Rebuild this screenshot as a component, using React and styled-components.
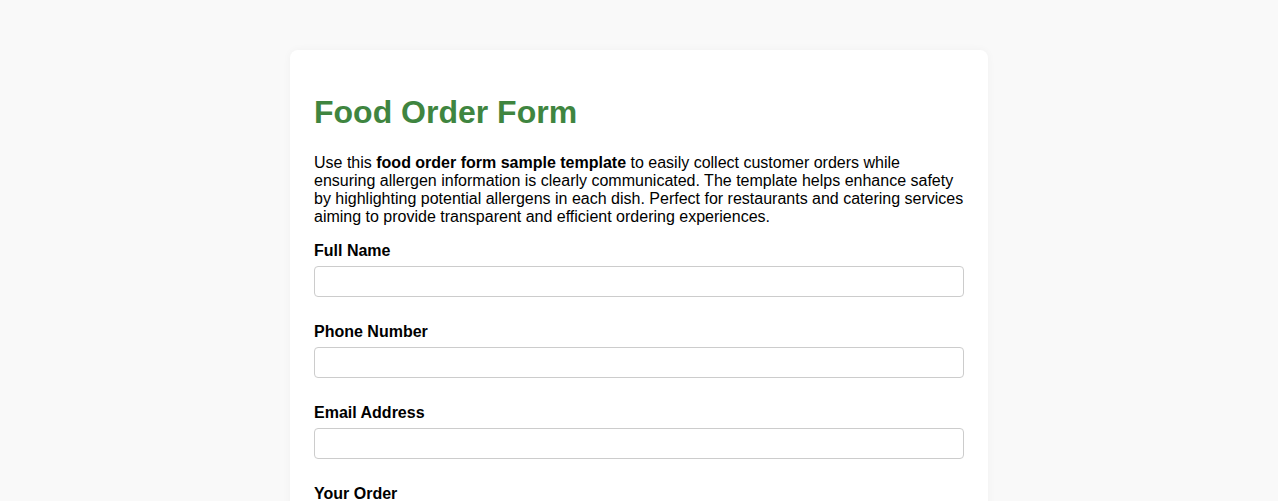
import React from 'react';
import styled, { createGlobalStyle } from 'styled-components';

const GlobalStyle = createGlobalStyle`
  body {
    margin: 0;
    background: #f9f9f9;
    font-family: "Liberation Sans", Arial, sans-serif;
    color: #000;
  }
`;

const Page = styled.div`
  display: flex;
  justify-content: center;
  padding-top: 50px;
`;

const Card = styled.div`
  width: 698px;
  box-sizing: border-box;
  padding: 24px;
  background: #fff;
  border-radius: 8px;
  box-shadow: 0 0 8px rgba(0, 0, 0, 0.04);
`;

const Title = styled.h1`
  margin: 20px 0 23px;
  font-size: 32px;
  font-weight: bold;
  color: #3f8540;
`;

const Intro = styled.p`
  margin: 0 0 16px;
  font-size: 16px;
  line-height: 18px;
`;

const Field = styled.div`
  margin-bottom: 26px;
`;

const Label = styled.label`
  display: block;
  font-size: 16px;
  font-weight: bold;
  line-height: 18px;
  margin-bottom: 6px;
`;

const Input = styled.input`
  display: block;
  width: 100%;
  height: 31px;
  box-sizing: border-box;
  border: 1px solid #ccc;
  border-radius: 4px;
  padding: 6px 8px;
  font-family: inherit;
  font-size: 16px;
`;

const fields = [
  { name: 'fullName', label: 'Full Name', type: 'text' },
  { name: 'phone', label: 'Phone Number', type: 'tel' },
  { name: 'email', label: 'Email Address', type: 'email' },
];

export default function App() {
  return (
    <>
      <GlobalStyle />
      <Page>
        <Card>
          <Title>Food Order Form</Title>
          <Intro>
            Use this <strong>food order form sample template</strong> to easily collect
            customer orders while ensuring allergen information is clearly communicated.
            The template helps enhance safety by highlighting potential allergens in each
            dish. Perfect for restaurants and catering services aiming to provide
            transparent and efficient ordering experiences.
          </Intro>
          <form>
            {fields.map(f => (
              <Field key={f.name}>
                <Label htmlFor={f.name}>{f.label}</Label>
                <Input id={f.name} name={f.name} type={f.type} />
              </Field>
            ))}
            <Field>
              <Label htmlFor="order">Your Order</Label>
              <Input id="order" name="order" type="text" />
            </Field>
          </form>
        </Card>
      </Page>
    </>
  );
}
